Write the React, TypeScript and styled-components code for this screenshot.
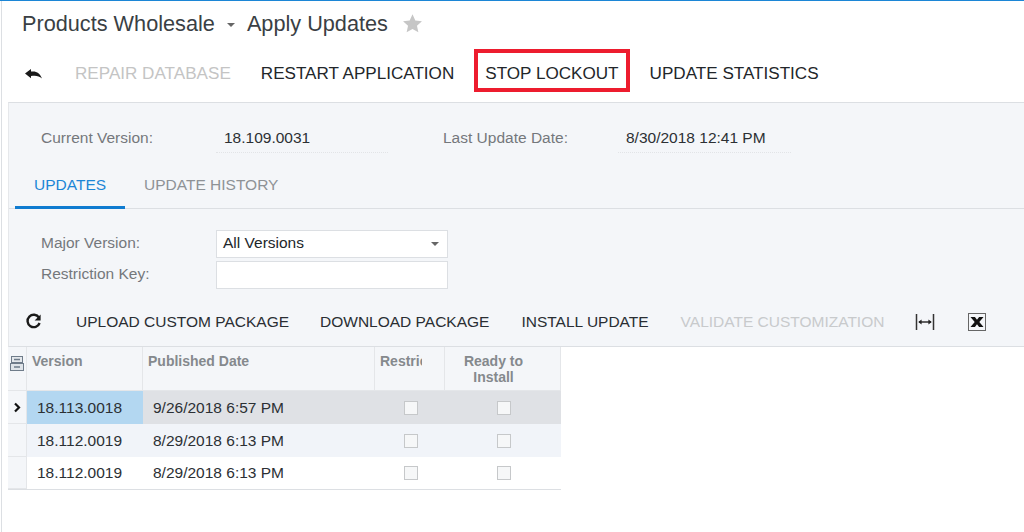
import React from 'react';
import styled, { createGlobalStyle } from 'styled-components';

const GlobalStyle = createGlobalStyle`
  html, body {
    margin: 0;
    padding: 0;
    background: #fff;
    font-family: "Liberation Sans", Arial, sans-serif;
  }
`;

const Page = styled.div`
  width: 1024px;
  height: 532px;
  box-sizing: border-box;
  overflow: hidden;
  border-top: 1px solid #1c86d6;
  display: flex;
  flex-direction: column;
  background: linear-gradient(to right, #fff 1px, #dcdfe3 1px, #dcdfe3 2px, #fff 2px);
`;

const TitleBar = styled.div`
  height: 46px;
  padding: 0 0 0 22px;
  display: flex;
  align-items: center;
  flex-shrink: 0;
`;

const Title = styled.span`
  font-size: 21.7px;
  color: #3a3f44;
`;

const TitleCaret = styled.span`
  width: 0;
  height: 0;
  margin: 2px 12px 0 12px;
  border-left: 4.5px solid transparent;
  border-right: 4.5px solid transparent;
  border-top: 4.5px solid #666;
`;

const StarIcon = styled.svg`
  width: 21px;
  height: 21px;
  margin-left: 14px;
  margin-top: -1px;
  fill: #c6c6c6;
`;

const MainToolbar = styled.div`
  height: 55px;
  box-sizing: border-box;
  padding: 0 0 1px 24px;
  display: flex;
  align-items: center;
  flex-shrink: 0;
`;

const ToolButton = styled.span<{ $disabled?: boolean; $left: number }>`
  font-size: 17.1px;
  color: ${(p) => (p.$disabled ? '#c4c4c4' : '#22262a')};
  margin-left: ${(p) => p.$left}px;
  white-space: nowrap;
`;

const Highlight = styled.span`
  display: flex;
  align-items: center;
  box-sizing: border-box;
  height: 43px;
  margin: -7px 0 0 20px;
  padding: 7px 7px 0;
  border: 4px solid #ed1c2e;
  font-size: 17.1px;
  color: #22262a;
  white-space: nowrap;
`;

const IconSvg = styled.svg`
  display: block;
  flex-shrink: 0;
`;

const Panel = styled.div`
  margin-left: 8px;
  height: 245px;
  flex-shrink: 0;
  background: #f4f6f9;
  border-top: 1px solid #dcdfe3;
  border-bottom: 1px solid #dcdfe3;
  border-left: 1px solid #e6e8eb;
  box-sizing: border-box;
  display: flex;
  flex-direction: column;
`;

const SummaryRow = styled.div`
  height: 60px;
  display: flex;
  padding-top: 21px;
  box-sizing: border-box;
  flex-shrink: 0;
`;

const FieldLabel = styled.span<{ $width: number; $left?: number }>`
  width: ${(p) => p.$width}px;
  margin-left: ${(p) => p.$left ?? 0}px;
  font-size: 15.5px;
  line-height: 27px;
  color: #74787c;
  flex-shrink: 0;
`;

const FormLabel = styled(FieldLabel)`
  margin-top: -3px;
`;

const ReadOnlyValue = styled.span<{ $width: number }>`
  width: ${(p) => p.$width}px;
  height: 29px;
  box-sizing: border-box;
  padding-left: 8px;
  font-size: 15.5px;
  line-height: 27px;
  color: #2c3034;
  border-bottom: 1px dotted #e2e4e7;
  flex-shrink: 0;
`;

const Tabs = styled.div`
  height: 46px;
  display: flex;
  box-sizing: border-box;
  padding-left: 6px;
  border-bottom: 1px solid #dcdfe3;
  flex-shrink: 0;
`;

const Tab = styled.div<{ $active?: boolean }>`
  height: 46px;
  box-sizing: border-box;
  padding: 13px 19px 0;
  font-size: 15.5px;
  color: ${(p) => (p.$active ? '#1c86d6' : '#8e9296')};
  border-bottom: ${(p) => (p.$active ? '3px solid #0f7bd0' : 'none')};
`;

const FormRow = styled.div<{ $top: number }>`
  display: flex;
  align-items: center;
  height: 28px;
  margin-top: ${(p) => p.$top}px;
  flex-shrink: 0;
`;

const SelectBox = styled.div`
  width: 232px;
  height: 28px;
  box-sizing: border-box;
  background: #fff;
  border: 1px solid #dcdfe3;
  padding: 0 8px 2px 6px;
  display: flex;
  align-items: center;
  justify-content: space-between;
  font-size: 15.5px;
  color: #22262a;
`;

const SelectCaret = styled.span`
  width: 0;
  height: 0;
  margin: 2px 0 0 0;
  border-left: 4.5px solid transparent;
  border-right: 4.5px solid transparent;
  border-top: 4.5px solid #666;
`;

const TextBox = styled.div`
  width: 232px;
  height: 28px;
  box-sizing: border-box;
  background: #fff;
  border: 1px solid #dcdfe3;
`;

const GridToolbar = styled.div`
  margin-top: 11px;
  height: 43px;
  display: flex;
  align-items: center;
  padding-left: 16px;
  flex-shrink: 0;
`;

const GridButton = styled.span<{ $disabled?: boolean; $left: number }>`
  font-size: 15.5px;
  color: ${(p) => (p.$disabled ? '#c8cacc' : '#2a2e33')};
  margin-left: ${(p) => p.$left}px;
  white-space: nowrap;
`;

const IconSlot = styled.span<{ $left: number }>`
  margin-left: ${(p) => p.$left}px;
  display: flex;
`;

const Table = styled.div`
  margin-left: 8px;
  width: 553px;
  display: grid;
  grid-template-columns: 19px 116px 232px 70px 116px;
  grid-template-rows: 44px 33px 33px 32px;
  border-bottom: 1px solid #dcdfe3;
`;

const HeaderCell = styled.div<{ $center?: boolean }>`
  background: #f4f6f9;
  border-right: 1px solid #e4e6e9;
  border-bottom: 1px solid #e4e6e9;
  box-sizing: border-box;
  padding: ${(p) => (p.$center ? '6px 18px 0 0' : '6px 5px 0')};
  font-size: 14px;
  font-weight: 700;
  line-height: 16px;
  color: #85898d;
  text-align: ${(p) => (p.$center ? 'center' : 'left')};
  white-space: ${(p) => (p.$center ? 'normal' : 'nowrap')};
`;

const ClippedTitle = styled.div`
  width: 42px;
  overflow: hidden;
`;

const MarkerCell = styled.div<{ $header?: boolean }>`
  background: #f4f6f9;
  border-right: 1px solid #e4e6e9;
  border-bottom: 1px solid #e4e6e9;
  box-sizing: border-box;
  display: flex;
  align-items: ${(p) => (p.$header ? 'flex-start' : 'center')};
  padding-top: ${(p) => (p.$header ? 9 : 0)}px;
  justify-content: center;
`;

const Cell = styled.div<{ $bg: string }>`
  background: ${(p) => p.$bg};
  box-sizing: border-box;
  display: flex;
  align-items: center;
  padding-left: 10px;
  font-size: 15.5px;
  color: #2c3034;
`;

const CheckCell = styled.div<{ $bg: string }>`
  background: ${(p) => p.$bg};
  display: flex;
  align-items: center;
  justify-content: center;
  padding-left: 1px;
`;

const CheckBox = styled.span`
  width: 14px;
  height: 14px;
  box-sizing: border-box;
  border: 1px solid #c6c8ca;
  background: #f6f7f8;
`;

const rows = [
  { version: '18.113.0018', date: '9/26/2018 6:57 PM', bg: '#dfe1e5', first: '#b3d7f1', selected: true },
  { version: '18.112.0019', date: '8/29/2018 6:13 PM', bg: '#f1f4f9', first: '#f1f4f9', selected: false },
  { version: '18.112.0019', date: '8/29/2018 6:13 PM', bg: '#ffffff', first: '#ffffff', selected: false },
];

export default function App() {
  return (
    <Page>
      <GlobalStyle />
      <TitleBar>
        <Title>Products Wholesale</Title>
        <TitleCaret />
        <Title>Apply Updates</Title>
        <StarIcon viewBox="0 0 24 24">
          <path d="M12 1.5l3.2 7.1 7.6.8-5.7 5.1 1.6 7.6L12 18.3l-6.7 3.8 1.6-7.6-5.7-5.1 7.6-.8z" />
        </StarIcon>
      </TitleBar>
      <MainToolbar>
        <IconSvg width="20" height="12" viewBox="0 0 20 12">
          <path d="M1 5.5L7 1v2.6c5-.8 9 1 11 7-3-2.8-6-3.2-11-2.6V10.2z" fill="#1a1a1a" />
        </IconSvg>
        <ToolButton $disabled $left={31}>REPAIR DATABASE</ToolButton>
        <ToolButton $left={30}>RESTART APPLICATION</ToolButton>
        <Highlight>STOP LOCKOUT</Highlight>
        <ToolButton $left={20}>UPDATE STATISTICS</ToolButton>
      </MainToolbar>
      <Panel>
        <SummaryRow>
          <FieldLabel $width={175} $left={32}>Current Version:</FieldLabel>
          <ReadOnlyValue $width={172}>18.109.0031</ReadOnlyValue>
          <FieldLabel $width={175} $left={55}>Last Update Date:</FieldLabel>
          <ReadOnlyValue $width={173}>8/30/2018 12:41 PM</ReadOnlyValue>
        </SummaryRow>
        <Tabs>
          <Tab $active>UPDATES</Tab>
          <Tab>UPDATE HISTORY</Tab>
        </Tabs>
        <FormRow $top={21}>
          <FormLabel $width={175} $left={32}>Major Version:</FormLabel>
          <SelectBox>
            All Versions
            <SelectCaret />
          </SelectBox>
        </FormRow>
        <FormRow $top={3}>
          <FormLabel $width={175} $left={32}>Restriction Key:</FormLabel>
          <TextBox />
        </FormRow>
        <GridToolbar>
          <IconSvg width="17" height="17" viewBox="0 0 17 17">
            <path d="M14 4.6A6.2 6.2 0 1 0 14.6 10" fill="none" stroke="#1a1a1a" strokeWidth="2.4" />
            <path d="M15.6 1.4v6h-6z" fill="#1a1a1a" />
          </IconSvg>
          <GridButton $left={34}>UPLOAD CUSTOM PACKAGE</GridButton>
          <GridButton $left={31}>DOWNLOAD PACKAGE</GridButton>
          <GridButton $left={32}>INSTALL UPDATE</GridButton>
          <GridButton $disabled $left={32}>VALIDATE CUSTOMIZATION</GridButton>
          <IconSlot $left={31}>
            <IconSvg width="20" height="18" viewBox="0 0 20 18">
              <path d="M1.5 1v16M18.5 1v16" stroke="#333" strokeWidth="1.5" fill="none" />
              <path d="M4 9h12" stroke="#222" strokeWidth="1.4" />
              <path d="M3.2 9l3.4-2.6v5.2zM16.8 9l-3.4-2.6v5.2z" fill="#222" />
            </IconSvg>
          </IconSlot>
          <IconSlot $left={33}>
            <IconSvg width="18" height="18" viewBox="0 0 18 18">
              <rect x="0.5" y="0.5" width="17" height="17" fill="#f4f6f9" stroke="#666" />
              <path d="M2.5 4h4.4L9 6.8 11.1 4h4.4l-4.2 5 4.2 5h-4.4L9 11.2 6.9 14H2.5l4.2-5z" fill="#111" />
            </IconSvg>
          </IconSlot>
        </GridToolbar>
      </Panel>
      <Table>
        <MarkerCell $header>
          <IconSvg width="14" height="15" viewBox="0 0 14 15">
            <rect x="1.5" y="0.5" width="11" height="6" fill="#e4e8ec" stroke="#6f7c8a" />
            <rect x="0.5" y="7.5" width="13" height="7" fill="#dfe4e9" stroke="#6f7c8a" />
            <path d="M4 3.5h6M4 11h6" stroke="#6f7c8a" strokeWidth="1.4" fill="none" />
          </IconSvg>
        </MarkerCell>
        <HeaderCell>Version</HeaderCell>
        <HeaderCell>Published Date</HeaderCell>
        <HeaderCell><ClippedTitle>Restricted</ClippedTitle></HeaderCell>
        <HeaderCell $center>Ready to<br />Install</HeaderCell>
        {rows.map((row, i) => (
          <React.Fragment key={i}>
            <MarkerCell>
              {row.selected && (
                <IconSvg width="9" height="11" viewBox="0 0 9 11">
                  <path d="M2 1.5l4 4-4 4" fill="none" stroke="#111" strokeWidth="2.2" />
                </IconSvg>
              )}
            </MarkerCell>
            <Cell $bg={row.first}>{row.version}</Cell>
            <Cell $bg={row.bg}>{row.date}</Cell>
            <CheckCell $bg={row.bg}><CheckBox /></CheckCell>
            <CheckCell $bg={row.bg}><CheckBox /></CheckCell>
          </React.Fragment>
        ))}
      </Table>
    </Page>
  );
}
